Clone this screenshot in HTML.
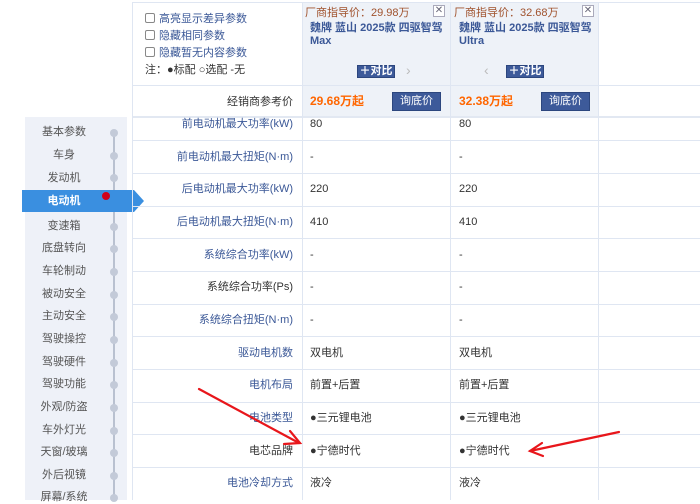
<!DOCTYPE html>
<html><head><meta charset="utf-8"><style>
*{margin:0;padding:0;box-sizing:border-box}
body{width:700px;height:500px;overflow:hidden;background:#fff;font-family:"Liberation Sans","Noto Sans CJK SC",sans-serif;font-size:11px;line-height:14px;color:#333;position:relative}
.a{position:absolute}
.hl{position:absolute;height:1px;background:#dfe6f2}
.vl{position:absolute;width:1px;background:#dfe6f2}
.lab{position:absolute;left:132px;width:161px;text-align:right;color:#3b5897}
.v{position:absolute;color:#333}
.cb{display:inline-block;width:10px;height:10px;border:1px solid #888;border-radius:2px;vertical-align:-1px;margin-right:4px;background:#fff}
.side{position:absolute;left:25px;width:102px;text-align:center;color:#555;font-size:11px}
.dot{position:absolute;left:110px;width:8px;height:8px;border-radius:50%;background:#c3cad8}
.btn{position:absolute;background:#3d5a9a;color:#fff;text-align:center;border:1px solid #2c467e}
</style></head><body>
<div class="a" style="left:25px;top:117px;width:102px;height:383px;background:#eef1f8"></div>
<div class="a" style="left:113px;top:130px;width:2px;height:370px;background:#b9c1d0"></div>
<div class="side" style="top:125px;width:78px">基本参数</div><div class="dot" style="top:129px"></div>
<div class="side" style="top:148px;width:78px">车身</div><div class="dot" style="top:152px"></div>
<div class="side" style="top:171px;width:78px">发动机</div><div class="dot" style="top:174px"></div>
<div class="a" style="left:22px;top:190px;width:112px;height:22px;background:#3a8fe0"></div>
<div class="a" style="left:134px;top:190px;width:0;height:0;border-top:11px solid transparent;border-bottom:11px solid transparent;border-left:10px solid #3a8fe0"></div>
<div class="side" style="top:194px;width:78px;color:#fff;font-weight:bold">电动机</div>
<div class="a" style="left:102px;top:192px;width:8px;height:8px;border-radius:50%;background:#d0021b"></div>
<div class="side" style="top:219px;width:78px">变速箱</div><div class="dot" style="top:223px"></div>
<div class="side" style="top:241px;width:78px">底盘转向</div><div class="dot" style="top:245px"></div>
<div class="side" style="top:264px;width:78px">车轮制动</div><div class="dot" style="top:268px"></div>
<div class="side" style="top:287px;width:78px">被动安全</div><div class="dot" style="top:291px"></div>
<div class="side" style="top:309px;width:78px">主动安全</div><div class="dot" style="top:313px"></div>
<div class="side" style="top:332px;width:78px">驾驶操控</div><div class="dot" style="top:336px"></div>
<div class="side" style="top:355px;width:78px">驾驶硬件</div><div class="dot" style="top:359px"></div>
<div class="side" style="top:377px;width:78px">驾驶功能</div><div class="dot" style="top:381px"></div>
<div class="side" style="top:400px;width:78px">外观/防盗</div><div class="dot" style="top:404px"></div>
<div class="side" style="top:423px;width:78px">车外灯光</div><div class="dot" style="top:427px"></div>
<div class="side" style="top:445px;width:78px">天窗/玻璃</div><div class="dot" style="top:449px"></div>
<div class="side" style="top:468px;width:78px">外后视镜</div><div class="dot" style="top:472px"></div>
<div class="side" style="top:490px;width:78px">屏幕/系统</div><div class="dot" style="top:494px"></div>

<div class="a" style="left:302px;top:2px;width:296px;height:115px;background:#eef2f8"></div>
<div class="hl" style="left:132px;top:2px;width:568px"></div>
<div class="hl" style="left:132px;top:85px;width:568px"></div>
<div class="hl" style="left:132px;top:116px;width:568px;height:2px;background:#e2e8f2"></div>
<div class="vl" style="left:132px;top:2px;height:498px"></div>
<div class="vl" style="left:302px;top:2px;height:498px"></div>
<div class="vl" style="left:450px;top:2px;height:498px"></div>
<div class="vl" style="left:598px;top:2px;height:498px"></div>
<div class="a" style="left:145px;top:11px;line-height:17px;color:#3b5897">
<div><span class="cb"></span>高亮显示差异参数</div>
<div><span class="cb"></span>隐藏相同参数</div>
<div><span class="cb"></span>隐藏暂无内容参数</div>
<div style="color:#333">注：●标配 ○选配 -无</div></div>
<div class="a" style="left:305px;top:6px;color:#a0522d">厂商指导价：29.98万</div>
<div class="a" style="left:433px;top:5px;width:12px;height:12px;border:1px solid #aab;font-size:10px;line-height:10px;text-align:center;color:#667;background:#fff">✕</div>
<div class="a" style="left:310px;top:22px;color:#3b5897;font-weight:bold;line-height:13px">魏牌 蓝山 2025款 四驱智驾<br>Max</div>
<div class="btn" style="left:357px;top:65px;width:38px;height:13px;line-height:11px;font-weight:bold">＋对比</div>
<div class="a" style="left:406px;top:63px;color:#bbb;font-size:14px">›</div>
<div class="a" style="left:454px;top:6px;color:#a0522d">厂商指导价：32.68万</div>
<div class="a" style="left:582px;top:5px;width:12px;height:12px;border:1px solid #aab;font-size:10px;line-height:10px;text-align:center;color:#667;background:#fff">✕</div>
<div class="a" style="left:459px;top:22px;color:#3b5897;font-weight:bold;line-height:13px">魏牌 蓝山 2025款 四驱智驾<br>Ultra</div>
<div class="a" style="left:484px;top:63px;color:#bbb;font-size:14px">‹</div>
<div class="btn" style="left:506px;top:65px;width:38px;height:13px;line-height:11px;font-weight:bold">＋对比</div>
<div class="lab" style="top:95px;color:#333">经销商参考价</div>
<div class="a" style="left:310px;top:94px;color:#ff6600;font-weight:bold;font-size:12px">29.68万起</div>
<div class="btn" style="left:392px;top:92px;width:49px;height:19px;line-height:17px">询底价</div>
<div class="a" style="left:459px;top:94px;color:#ff6600;font-weight:bold;font-size:12px">32.38万起</div>
<div class="btn" style="left:541px;top:92px;width:49px;height:19px;line-height:17px">询底价</div>

<div class="hl" style="left:132px;top:140px;width:568px"></div>
<div class="hl" style="left:132px;top:173px;width:568px"></div>
<div class="hl" style="left:132px;top:206px;width:568px"></div>
<div class="hl" style="left:132px;top:238px;width:568px"></div>
<div class="hl" style="left:132px;top:271px;width:568px"></div>
<div class="hl" style="left:132px;top:304px;width:568px"></div>
<div class="hl" style="left:132px;top:336px;width:568px"></div>
<div class="hl" style="left:132px;top:369px;width:568px"></div>
<div class="hl" style="left:132px;top:402px;width:568px"></div>
<div class="hl" style="left:132px;top:434px;width:568px"></div>
<div class="hl" style="left:132px;top:467px;width:568px"></div>

<div class="lab" style="top:117px">前电动机最大功率(kW)</div><div class="v" style="left:310px;top:117px">80</div><div class="v" style="left:459px;top:117px">80</div>
<div class="lab" style="top:150px">前电动机最大扭矩(N·m)</div><div class="v" style="left:310px;top:150px">-</div><div class="v" style="left:459px;top:150px">-</div>
<div class="lab" style="top:182px">后电动机最大功率(kW)</div><div class="v" style="left:310px;top:182px">220</div><div class="v" style="left:459px;top:182px">220</div>
<div class="lab" style="top:215px">后电动机最大扭矩(N·m)</div><div class="v" style="left:310px;top:215px">410</div><div class="v" style="left:459px;top:215px">410</div>
<div class="lab" style="top:248px">系统综合功率(kW)</div><div class="v" style="left:310px;top:248px">-</div><div class="v" style="left:459px;top:248px">-</div>
<div class="lab" style="top:280px;color:#333">系统综合功率(Ps)</div><div class="v" style="left:310px;top:280px">-</div><div class="v" style="left:459px;top:280px">-</div>
<div class="lab" style="top:313px">系统综合扭矩(N·m)</div><div class="v" style="left:310px;top:313px">-</div><div class="v" style="left:459px;top:313px">-</div>
<div class="lab" style="top:346px">驱动电机数</div><div class="v" style="left:310px;top:346px">双电机</div><div class="v" style="left:459px;top:346px">双电机</div>
<div class="lab" style="top:378px">电机布局</div><div class="v" style="left:310px;top:378px">前置+后置</div><div class="v" style="left:459px;top:378px">前置+后置</div>
<div class="lab" style="top:411px">电池类型</div><div class="v" style="left:310px;top:411px">●三元锂电池</div><div class="v" style="left:459px;top:411px">●三元锂电池</div>
<div class="lab" style="top:444px;color:#333">电芯品牌</div><div class="v" style="left:310px;top:444px">●宁德时代</div><div class="v" style="left:459px;top:444px">●宁德时代</div>
<div class="lab" style="top:476px">电池冷却方式</div><div class="v" style="left:310px;top:476px">液冷</div><div class="v" style="left:459px;top:476px">液冷</div>

<svg class="a" style="left:0;top:0" width="700" height="500">
<g stroke="#e8161b" stroke-width="2.2" fill="none" stroke-linecap="round">
<line x1="199" y1="389" x2="299" y2="443"/>
<polyline points="290,431 300,443 284,444"/>
<line x1="619" y1="432" x2="530" y2="451"/>
<polyline points="542,443 530,451 543,456"/>
</g></svg>
</body></html>
